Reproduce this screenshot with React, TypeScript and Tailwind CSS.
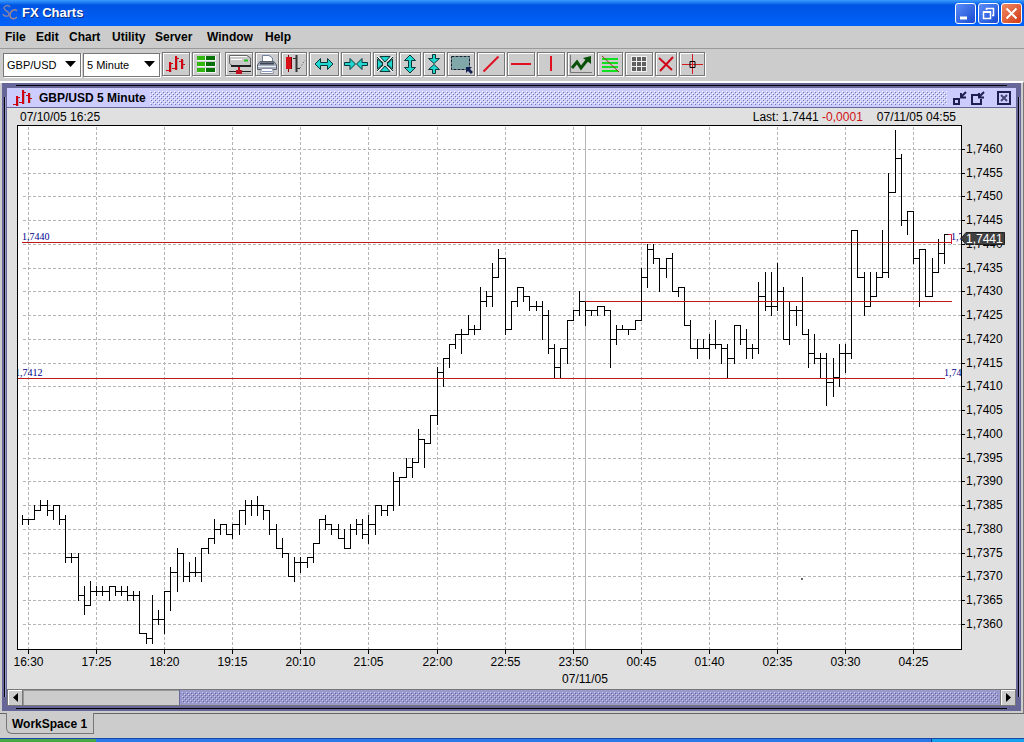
import type { ReactNode } from "react";

const MENUS = [
  { label: "File", width: "w-[31px]" },
  { label: "Edit", width: "w-[33px]" },
  { label: "Chart", width: "w-[43px]" },
  { label: "Utility", width: "w-[43px]" },
  { label: "Server", width: "w-[52px]" },
  { label: "Window", width: "w-[58px]" },
  { label: "Help", width: "w-[40px]" },
];

// [high, low, close] in pips above 1.7300, one bar every five minutes
const BARS = [
  [83, 81, 82], [82, 81, 82], [85, 82, 84], [86, 84, 85], [86, 83, 84],
  [85, 82, 85], [85, 81, 82], [83, 73, 74], [75, 73, 74], [75, 65, 66],
  [68, 62, 64], [69, 64, 67], [68, 66, 67], [68, 66, 67], [68, 65, 68],
  [68, 66, 67], [68, 66, 67], [68, 65, 66], [67, 65, 66], [67, 58, 58],
  [58, 56, 57], [66, 56, 61], [63, 60, 61], [67, 58, 67], [72, 63, 71],
  [76, 67, 75], [75, 69, 70], [73, 69, 71], [74, 70, 71], [76, 69, 76],
  [78, 75, 78], [82, 77, 80], [81, 79, 81], [81, 79, 79], [81, 78, 81],
  [84, 79, 84], [86, 81, 85], [86, 83, 85], [87, 83, 85], [85, 82, 84],
  [84, 79, 80], [81, 76, 76], [78, 74, 75], [75, 70, 70], [74, 69, 73],
  [74, 71, 73], [74, 72, 74], [77, 73, 77], [82, 77, 82], [83, 80, 81],
  [81, 79, 80], [81, 78, 78], [80, 76, 76], [81, 76, 80], [82, 79, 81],
  [82, 78, 79], [83, 77, 81], [85, 79, 85], [85, 83, 84], [85, 83, 85],
  [92, 84, 90], [91, 85, 91], [95, 91, 93], [95, 91, 94], [101, 94, 99],
  [99, 93, 98], [104, 98, 104], [114, 102, 113], [116, 110, 116], [119, 114, 119],
  [121, 118, 121], [122, 117, 121], [125, 121, 122], [123, 121, 122], [131, 122, 128],
  [130, 127, 129], [136, 127, 133], [139, 133, 137], [137, 121, 122], [128, 122, 128],
  [131, 127, 131], [131, 128, 129], [129, 126, 127], [128, 126, 127], [128, 120, 125],
  [126, 117, 118], [119, 112, 114], [118, 112, 118], [124, 115, 124], [126, 124, 126],
  [130, 125, 128], [128, 123, 126], [126, 125, 126], [127, 125, 127], [127, 125, 126],
  [126, 114, 120], [123, 119, 122], [123, 122, 122], [122, 121, 122], [124, 122, 124],
  [135, 124, 133], [140, 131, 139], [140, 136, 137], [137, 130, 135], [137, 133, 137],
  [138, 130, 130], [131, 129, 131], [131, 123, 123], [124, 118, 118], [120, 116, 118],
  [120, 118, 118], [121, 116, 119], [124, 118, 119], [119, 115, 118], [119, 112, 116],
  [123, 115, 123], [123, 119, 120], [122, 116, 118], [119, 116, 118], [132, 117, 129],
  [134, 126, 127], [134, 125, 127], [136, 126, 130], [131, 120, 120], [128, 119, 126],
  [127, 123, 126], [133, 121, 121], [122, 114, 117], [121, 115, 116], [117, 112, 116],
  [117, 106, 111], [116, 108, 112], [119, 110, 117], [119, 113, 117], [143, 116, 143],
  [143, 133, 133], [134, 125, 127], [134, 127, 129], [134, 129, 133], [143, 133, 134],
  [155, 133, 151], [164, 151, 158], [159, 144, 145], [147, 142, 147], [147, 136, 137],
  [139, 127, 139], [139, 129, 129], [137, 129, 134], [141, 134, 138], [142, 136, 142],
];

const TIMES = [
  "16:30", "17:25", "18:20", "19:15", "20:10", "21:05", "22:00",
  "22:55", "23:50", "00:45", "01:40", "02:35", "03:30", "04:25",
];

const PRICES = Array.from({ length: 21 }, (_, i) => 160 - i * 5);

const LEVELS = [
  { x1: 22, x2: 951, y: 242 },
  { x1: 585, x2: 952, y: 301 },
  { x1: 18, x2: 945, y: 378 },
];

const barX = (i: number) => Math.floor(22.4 + i * 6.189) + 0.5;
const priceY = (pips: number) => Math.floor(149.4 + (160 - pips) * 4.75) + 0.5;
const priceText = (pips: number) => `1,7${300 + pips}`;

const BAR_PATH = BARS.map(([high, low, close], i) => {
  const x = barX(i);
  return `M${x} ${priceY(high) - 0.5}V${priceY(low) + 0.5}M${x} ${priceY(close)}H${barX(i + 1)}`;
}).join("");

function Chart() {
  return (
    <svg
      viewBox="7 125 1009 564"
      className="block w-full font-['Liberation_Sans',Arial,sans-serif] text-[12px]"
      role="img"
      aria-label="GBP/USD 5 minute bar chart"
    >
      <defs>
        <clipPath id="plot">
          <rect x="18" y="126" width="943" height="523" />
        </clipPath>
      </defs>
      <rect x="17.5" y="125.5" width="944" height="524" fill="#fff" stroke="#000" />

      <g stroke="#b5b5b5" strokeDasharray="3 2" shapeRendering="crispEdges">
        {PRICES.map((p) => (
          <line key={p} x1="23" x2="961" y1={priceY(p)} y2={priceY(p)} />
        ))}
        {TIMES.map((t, i) => (
          <line key={t} x1={barX(1 + i * 11)} x2={barX(1 + i * 11)} y1="127" y2="649" />
        ))}
      </g>
      <line x1="585.5" x2="585.5" y1="126" y2="649" stroke="#b5b5b5" />

      <g clipPath="url(#plot)">
        <path d={BAR_PATH} fill="none" stroke="#000" shapeRendering="crispEdges" />
        {LEVELS.map((l) => (
          <rect key={l.y} x={l.x1} y={l.y} width={l.x2 - l.x1} height="1" fill="#c01818" />
        ))}
        <path d="M948 234.5H951.5V244" fill="none" stroke="#d81830" />
        <rect x="801" y="578" width="2" height="2" fill="#666" />
        <g
          fill="#000090"
          className="font-['Liberation_Serif','Times_New_Roman',serif] text-[10px]"
        >
          <text x="22" y="240">1,7440</text>
          <text x="15" y="376">1,7412</text>
          <text x="951" y="240">1,7</text>
          <text x="944" y="376">1,74</text>
        </g>
      </g>

      {PRICES.map((p) => (
        <g key={p}>
          <line x1="962" x2="965" y1={priceY(p)} y2={priceY(p)} stroke="#000" />
          <text x="966" y={priceY(p) + 3.5}>{priceText(p)}</text>
        </g>
      ))}
      {TIMES.map((t, i) => (
        <g key={t}>
          <line x1={barX(1 + i * 11)} x2={barX(1 + i * 11)} y1="650" y2="654" stroke="#000" />
          <text x={barX(1 + i * 11)} y="666" textAnchor="middle">{t}</text>
        </g>
      ))}
      <text x="585" y="683" textAnchor="middle">07/11/05</text>

      <path d="M961 238.5L966 232.5H1004.5V244.5H966Z" fill="#404040" stroke="#222" />
      <text x="966" y="243" fill="#fff">1,7441</text>
    </svg>
  );
}

function Bumps({ id, light, dark }: { id: string; light: string; dark: string }) {
  return (
    <svg className="h-full w-full" shapeRendering="crispEdges" aria-hidden="true">
      <pattern id={id} width="4" height="4" patternUnits="userSpaceOnUse">
        <path d="M0 0h1v1h-1zM2 2h1v1h-1z" fill={light} />
        <path d="M1 1h1v1h-1zM3 3h1v1h-1z" fill={dark} />
      </pattern>
      <rect width="100%" height="100%" fill={`url(#${id})`} />
    </svg>
  );
}

function BarsIcon() {
  return (
    <svg width="20" height="18" viewBox="0 0 20 18" fill="none" aria-hidden="true">
      <path d="M5 8V17M11 2V15M17 5V14" stroke="#888" />
      <path d="M3 7H5V17H3ZM9 1H11V15H9ZM15 4H17V14H15Z" fill="#d00010" />
      <path
        d="M0 15.500H4M4 8.500H7M6 13.500H10M10 3.500H13M13 6.500H16M16 9.500H19"
        stroke="#d00010"
      />
    </svg>
  );
}

const CYAN = { fill: "#20d8d0", stroke: "#083838", strokeWidth: 1 };

// every toolbar glyph is drawn on a 20x20 grid
const GLYPHS: Record<string, ReactNode> = {
  quotes: (
    <>
      <path d="M1 2h19v5h-19zM1 8h19v5h-19zM1 14h19v5h-19z" fill="#f4f4f4" />
      <path d="M1 2h8v4h-8zM1 8h8v4h-8zM1 14h8v4h-8z" fill="#30b810" />
      <path d="M10 2h9v4h-9zM10 8h9v4h-9zM10 14h9v4h-9z" fill="#087008" />
    </>
  ),
  connection: (
    <>
      <path d="M0.500 1.500H18L21.500 4V11.500H3L0.500 9.500Z" fill="#c8c8c8" stroke="#666" />
      <path d="M1 2.500H18M2 5.500H13" stroke="#fff" />
      <path d="M2 12H22" stroke="#222" strokeWidth="2" />
      <path d="M15 6.500H19" stroke="#20c020" strokeWidth="2" />
      <path d="M0 17.500H7M13 17.500H22" stroke="#222" />
      <path d="M0 19.500H7M13 19.500H22" stroke="#aaa" />
      <path d="M9 13H11V16H13V20H7V16H9Z" fill="#c01020" />
    </>
  ),
  print: (
    <>
      <path d="M5.500 8V1.500H12L15.500 4V8" fill="#fff" stroke="#7080a0" />
      <path d="M3 7.500H17L19.500 11V15.500H0.500V11Z" fill="#a8b0c0" stroke="#586070" />
      <path d="M3 9.500H17" stroke="#3c4454" strokeWidth="2" />
      <path d="M1 12.500H19" stroke="#e8ecf4" />
      <path d="M4.500 14.500H15.500L16.500 19.500H3.500Z" fill="#fff" stroke="#8890a0" />
      <path d="M5 17.500H15" stroke="#8898c0" />
    </>
  ),
  candles: (
    <>
      <path d="M4.500 1V18" stroke="#800008" />
      <path d="M2 3H8V15H2Z" fill="#d81018" />
      <path d="M7.500 3V15" stroke="#800008" />
      <path d="M12.500 1V18" stroke="#333" strokeWidth="2" />
      <path d="M9 4.500H12M13 14.500H16" stroke="#333" />
      <path d="M16 14L21 6" stroke="#555" strokeDasharray="1 2" />
    </>
  ),
  expandX: (
    <path d="M1 10L6.500 4.500V8.500H13.500V4.500L19 10L13.500 15.500V11.500H6.500V15.500Z" {...CYAN} />
  ),
  shrinkX: (
    <path
      d="M-1.500 8.500H4V4.500L9.500 10L4 15.500V11.500H-1.500ZM21.500 8.500H16V4.500L10.500 10L16 15.500V11.500H21.500Z"
      {...CYAN}
    />
  ),
  shrinkBoth: (
    <>
      <path d="M5 2.500H15L10 8ZM5 17.500H15L10 12Z" {...CYAN} />
      <path d="M2.500 5V15L8 10ZM17.500 5V15L12 10Z" {...CYAN} />
      <path d="M2 2L7 7M18 2L13 7M2 18L7 13M18 18L13 13" stroke="#f0f0f0" strokeWidth="1.500" />
      <path d="M2 3L8 9M18 3L12 9M2 17L8 11M18 17L12 11" stroke="#083838" />
    </>
  ),
  expandY: (
    <path d="M10 1L15.500 6.500H11.500V13.500H15.500L10 19L4.500 13.500H8.500V6.500H4.500Z" {...CYAN} />
  ),
  shrinkY: (
    <path
      d="M8.500 0.500V4.500H4.500L10 9.500L15.500 4.500H11.500V0.500ZM8.500 19.500V15.500H4.500L10 10.500L15.500 15.500H11.500V19.500Z"
      {...CYAN}
    />
  ),
  select: (
    <>
      <path d="M0.500 2.500H18.500V15.500H0.500Z" fill="#80a8a8" stroke="#102030" strokeDasharray="3 1" />
      <path d="M15 13H21L19 15L22 18L20 20L17 17L15 19Z" fill="#102050" />
    </>
  ),
  trend: <path d="M2.500 17.500L17.500 2.500" stroke="#e01020" strokeWidth="2" />,
  horizontal: <path d="M0 10H20" stroke="#e01020" strokeWidth="2" />,
  vertical: <path d="M10 2V17" stroke="#e01020" strokeWidth="2" />,
  study: (
    <>
      <path d="M-0.500 1V18.500H21" fill="none" stroke="#777" />
      <path d="M1 14L6 8L10 14L17 5" fill="none" stroke="#085008" strokeWidth="3" />
      <path d="M12 4L20 2L20 10Z" fill="#085008" />
    </>
  ),
  levels: (
    <>
      <path d="M2 5H18M2 9H18M2 13H18M2 17H18" stroke="#10e020" strokeWidth="2" />
      <path d="M2 2L19 18" stroke="#904020" />
    </>
  ),
  grid: (
    <>
      <path d="M2 2H18V18H2Z" fill="#f0f0f0" />
      <path
        d="M3 3h4v4h-4zM8 3h4v4h-4zM13 3h4v4h-4zM3 8h4v4h-4zM8 8h4v4h-4zM13 8h4v4h-4zM3 13h4v4h-4zM8 13h4v4h-4zM13 13h4v4h-4z"
        fill="#606060"
      />
    </>
  ),
  remove: <path d="M3 4L16 16M17 3L4 17" stroke="#d00818" strokeWidth="2" />,
  crosshair: (
    <>
      <path d="M10.500 0V20M0 10.500H21" stroke="#d81818" />
      <path d="M8 7.500H13V13.500H8Z" fill="none" stroke="#000" />
    </>
  ),
};

const TOOLS = [
  { icon: "bars", label: "Bar chart", width: "w-[28px]" },
  { icon: "quotes", label: "Quote list", width: "w-[28px] mr-[3px]" },
  { icon: "connection", label: "Connection", width: "w-[28px]" },
  { icon: "print", label: "Print", width: "w-[24px]" },
  { icon: "candles", label: "Chart style", width: "w-[26px]" },
  { icon: "expandX", label: "Expand time axis", width: "w-[30px]" },
  { icon: "shrinkX", label: "Shrink time axis", width: "w-[30px]" },
  { icon: "shrinkBoth", label: "Reset zoom", width: "w-[24px]" },
  { icon: "expandY", label: "Expand price axis", width: "w-[22px]" },
  { icon: "shrinkY", label: "Shrink price axis", width: "w-[22px]" },
  { icon: "select", label: "Select area", width: "w-[28px]" },
  { icon: "trend", label: "Trend line", width: "w-[28px]" },
  { icon: "horizontal", label: "Horizontal line", width: "w-[28px]" },
  { icon: "vertical", label: "Vertical line", width: "w-[28px]" },
  { icon: "study", label: "Studies", width: "w-[28px]" },
  { icon: "levels", label: "Retracement levels", width: "w-[26px]" },
  { icon: "grid", label: "Grid", width: "w-[28px]" },
  { icon: "remove", label: "Delete", width: "w-[22px]" },
  { icon: "crosshair", label: "Crosshair", width: "w-[26px]" },
];

function ToolButton({ icon, label, width }: { icon: string; label: string; width: string }) {
  return (
    <button
      type="button"
      aria-label={label}
      className={`flex h-6 shrink-0 items-center justify-center border border-[#777] bg-[#ccc] shadow-[1px_1px_0_#fff,inset_1px_1px_0_#fff] ${width}`}
    >
      {icon === "bars" ? (
        <BarsIcon />
      ) : (
        <svg width="20" height="20" viewBox="0 0 20 20" className="shrink-0 overflow-visible" aria-hidden="true">
          {GLYPHS[icon]}
        </svg>
      )}
    </button>
  );
}

function Combo({ label, options, width }: { label: string; options: string[]; width: string }) {
  return (
    <div className={`relative h-6 shrink-0 ${width}`}>
      <select
        aria-label={label}
        className="h-full w-full appearance-none border border-[#777] bg-white pl-[3px] text-[11px] text-black shadow-[1px_1px_0_#fff]"
      >
        {options.map((o) => (
          <option key={o}>{o}</option>
        ))}
      </select>
      <svg className="pointer-events-none absolute top-[9px] right-[5px]" width="11" height="6" aria-hidden="true">
        <path d="M0 0H11L5.500 6Z" fill="#000" />
      </svg>
    </div>
  );
}

function WindowButton({ label, color, children }: { label: string; color: string; children: ReactNode }) {
  return (
    <button
      type="button"
      aria-label={label}
      className={`flex size-[21px] items-center justify-center rounded-[3px] border border-white ${color}`}
    >
      <svg width="15" height="15" viewBox="0 0 15 15" fill="none" stroke="#fff" strokeWidth="2" aria-hidden="true">
        {children}
      </svg>
    </button>
  );
}

function TitleBar() {
  return (
    <header className="flex h-[26px] items-center bg-linear-to-b from-[#3c9cff] via-[#0054e3] via-20% to-[#0062fa] pr-[2px] pl-[2px]">
      <svg width="17" height="20" viewBox="0 0 17 20" fill="none" strokeWidth="1.500" aria-hidden="true">
        <path d="M8 4C6 1 2 3 2 5C2 8 7 8 7 11C7 14 2 14 1 11" stroke="#7c82b0" />
        <path d="M15 8C13 5 8 8 8 12C8 16 12 17 15 14" stroke="#a08490" />
      </svg>
      <h1 className="ml-[3px] flex-1 text-[13px] font-bold text-white [text-shadow:1px_1px_0_#0c2c80]">FX Charts</h1>
      <div className="flex gap-[2px]">
        <WindowButton label="Minimize" color="bg-linear-to-br from-[#5c8cf8] to-[#1848d0]">
          <path d="M2 12H9" strokeWidth="3" />
        </WindowButton>
        <WindowButton label="Restore" color="bg-linear-to-br from-[#5c8cf8] to-[#1848d0]">
          <path d="M5.500 4V2.500H12.500V9.500H11" strokeWidth="1.500" />
          <path d="M2.500 6H9.500V12.500H2.500Z" strokeWidth="1.500" />
          <path d="M2 6H10" />
        </WindowButton>
        <WindowButton label="Close" color="bg-linear-to-br from-[#f08860] to-[#d03810]">
          <path d="M2.500 2.500L12.500 12.500M12.500 2.500L2.500 12.500" />
        </WindowButton>
      </div>
    </header>
  );
}

function FrameTitle() {
  return (
    <div className="flex h-5 items-center border-b border-[#666699] bg-[#ccccff] pr-[5px] pl-[6px]">
      <BarsIcon />
      <h2 className="ml-[6px] text-[12px] font-bold whitespace-nowrap">GBP/USD 5 Minute</h2>
      <div className="mr-[6px] ml-1 h-[14px] min-w-0 flex-1">
        <Bumps id="title-bumps" light="#fff" dark="#7777aa" />
      </div>
      <button type="button" aria-label="Minimize chart" className="mr-1">
        <svg width="14" height="14" viewBox="0 0 14 14" fill="none" stroke="#202050" aria-hidden="true">
          <path d="M1 8H6V13H1Z" strokeWidth="2" />
          <path d="M13 1L8 6M8 2V6.500H13" strokeWidth="2" />
        </svg>
      </button>
      <button type="button" aria-label="Maximize chart" className="mr-3">
        <svg width="14" height="14" viewBox="0 0 14 14" fill="none" stroke="#202050" aria-hidden="true">
          <path d="M7 4H1V13H10V8" strokeWidth="2" />
          <path d="M13 1L8 6M8 2V6.500H13" strokeWidth="2" />
        </svg>
      </button>
      <button type="button" aria-label="Close chart">
        <svg width="14" height="14" viewBox="0 0 14 14" fill="none" stroke="#202050" aria-hidden="true">
          <path d="M1 1H13V13H1Z" strokeWidth="2" />
          <path d="M4 4L10 10M10 4L4 10" stroke="#484878" strokeWidth="2" />
        </svg>
      </button>
    </div>
  );
}

function ScrollBar() {
  const arrow =
    "flex w-4 shrink-0 items-center justify-center border border-[#777] bg-[#ccc] shadow-[inset_1px_1px_0_#fff]";
  return (
    <div className="flex h-[17px] bg-[#ccc]">
      <button type="button" aria-label="Scroll left" className={arrow}>
        <svg width="5" height="9" aria-hidden="true">
          <path d="M5 0V9L0 4.500Z" />
        </svg>
      </button>
      <div className="flex min-w-0 flex-1 border-y border-[#777] shadow-[inset_1px_1px_0_#999]">
        <div className="w-[16%]" />
        <div className="min-w-0 flex-1 border-l border-[#666699] bg-[#9999cc] p-[2px]">
          <Bumps id="scroll-bumps" light="#ccccff" dark="#666699" />
        </div>
      </div>
      <button type="button" aria-label="Scroll right" className={arrow}>
        <svg width="5" height="9" aria-hidden="true">
          <path d="M0 0V9L5 4.500Z" />
        </svg>
      </button>
    </div>
  );
}

function ChartWindow() {
  return (
    <section className="relative bg-[#666699] p-[5px]">
      <div className="absolute top-[2px] right-[14px] left-[14px] h-px bg-black" />
      <div className="absolute right-[14px] bottom-[2px] left-[14px] h-px bg-black" />
      <div className="absolute top-[14px] bottom-[14px] left-[2px] w-px bg-black" />
      <div className="absolute top-[14px] right-[2px] bottom-[14px] w-px bg-black" />
      <div className="absolute top-[14px] bottom-[14px] left-[3px] w-px bg-[#9999cc]" />
      <div className="absolute top-[14px] right-[1px] bottom-[14px] w-px bg-[#9999cc]" />
      <FrameTitle />
      <div className="bg-[#e0e0e0]">
        <div className="flex h-[17px] items-center pr-[60px] pl-[13px] text-[12px] whitespace-nowrap">
          <span className="flex-1">07/10/05 16:25</span>
          <span>
            Last: 1.7441 <span className="text-[#d01018]">-0,0001</span>
          </span>
          <span className="ml-[14px]">07/11/05 04:55</span>
        </div>
        <Chart />
        <ScrollBar />
      </div>
    </section>
  );
}

export default function App() {
  return (
    <div className="bg-[#ccc] font-['Liberation_Sans',Arial,sans-serif] text-black">
      <TitleBar />
      <nav className="flex h-[23px] items-center border-b border-[#999] pl-[5px]">
        {MENUS.map((m) => (
          <button key={m.label} type="button" className={`text-left text-[12px] font-bold ${m.width}`}>
            {m.label}
          </button>
        ))}
      </nav>
      <div className="flex h-8 items-center gap-[2px] overflow-hidden pb-[2px] pl-[3px]">
        <Combo label="Symbol" options={["GBP/USD", "EUR/USD", "USD/JPY"]} width="w-[78px]" />
        <Combo label="Interval" options={["5 Minute", "15 Minute", "60 Minute"]} width="w-[77px]" />
        {TOOLS.map((t) => (
          <ToolButton key={t.icon} {...t} />
        ))}
      </div>
      <main className="border-t-2 border-r border-t-white border-r-[#777] pr-[2px] pb-[2px] pl-[2px]">
        <ChartWindow />
      </main>
      <div className="flex h-[25px] items-start">
        <div className="w-[6px] border-t border-[#666]" />
        <button
          type="button"
          className="h-[21px] rounded-bl-md border-r border-b border-l border-[#777] pt-px pr-[6px] pl-[5px] text-[12px] font-bold whitespace-nowrap"
        >
          WorkSpace 1
        </button>
        <div className="flex-1 border-t border-[#666]" />
      </div>
      <footer className="flex h-1 border-t border-[#1848a8] bg-[#2c78e8]">
        <div className="w-24 bg-[#48a848]" />
        <div className="flex-1" />
        <div className="w-[93px] border-l border-[#083880] bg-[#18a0f0]" />
      </footer>
    </div>
  );
}
